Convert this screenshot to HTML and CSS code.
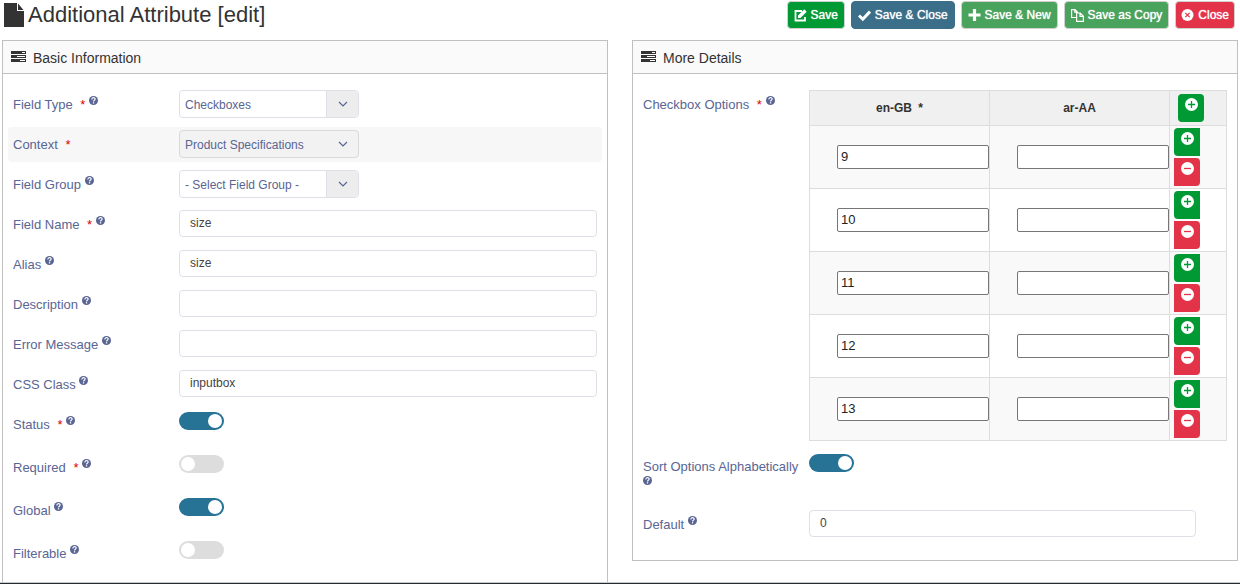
FILE: index.html
```html
<!DOCTYPE html>
<html lang="en">
<head>
<meta charset="utf-8">
<title>Additional Attribute [edit]</title>
<link rel="stylesheet" href="styles.css">
</head>
<body>
<svg class="sprite" aria-hidden="true">
  <symbol id="help" viewBox="0 0 16 16"><circle cx="8" cy="8" r="8" fill="currentColor"/><path d="M5 6c0-4 6-4 6-.6C11 7.600 8 7.500 8 9.800" fill="none" stroke="#fff" stroke-width="2"/><path d="M6.900 11h2.300v2.300H6.900z" fill="#fff"/></symbol>
  <symbol id="tasks" viewBox="0 0 15 11"><path d="M0 0h15v3H0zM0 4h15v3H0zM0 8h15v3H0z" fill="currentColor"/><path d="M11 1h3v1h-3zM6 5h8v1H6zM9 9h5v1H9z" fill="#fff"/></symbol>
  <symbol id="plus" viewBox="0 0 13 13"><circle cx="6.500" cy="6.500" r="6.500" fill="#fff"/><path d="M6.500 3v7M3 6.500h7" stroke="#093" stroke-width="1.300"/></symbol>
  <symbol id="minus" viewBox="0 0 13 13"><circle cx="6.500" cy="6.500" r="6.500" fill="#fff"/><path d="M3 6.500h7" stroke="#e33349" stroke-width="1.300"/></symbol>
  <symbol id="down" viewBox="0 0 10 6"><path d="M1 1l4 4 4-4" fill="none" stroke="currentColor" stroke-width="1.200"/></symbol>
</svg>

<header class="topbar">
  <h1 class="title">
    <svg class="title-icon" viewBox="0 0 20 24"><path d="M0 0h13v8h7v16H0zM14 0.500L19.500 7H14z" fill="#333"/></svg>
    Additional Attribute [edit]
  </h1>
  <div class="toolbar">
    <button class="btn btn-save" type="button"><svg class="btn-icon" viewBox="0 0 13 13"><path d="M8 2H1.500v9.500H11V8" fill="none" stroke="#fff" stroke-width="1.800"/><path d="M4 6.500L10.300 0.300l2.400 2.400L6.400 9H4z" fill="#fff"/></svg>Save</button>
    <button class="btn btn-blue" type="button"><svg class="btn-icon" viewBox="0 0 13 13"><path d="M1 6.500l3.800 3.700L12 2.500" fill="none" stroke="#fff" stroke-width="3"/></svg>Save &amp; Close</button>
    <button class="btn btn-green" type="button"><svg class="btn-icon" viewBox="0 0 13 13"><path d="M6.500 0v12M0.500 6h12" stroke="#fff" stroke-width="3.200"/></svg>Save &amp; New</button>
    <button class="btn btn-green" type="button"><svg class="btn-icon" viewBox="0 0 13 13"><path d="M5.500 8.500H.6V.6H4l2.400 2.400v1M3.800.8v2.400h2.400M5.600 4h3.600l3.200 3.200v5.200H5.600zM9 4.200v3.200h3.200" fill="none" stroke="#fff" stroke-width="1.200"/></svg>Save as Copy</button>
    <button class="btn btn-red" type="button"><svg class="btn-icon" viewBox="0 0 13 13"><circle cx="6.500" cy="6" r="6" fill="#fff"/><path d="M4.300 3.800l4.400 4.400M8.700 3.800L4.300 8.200" stroke="#e33349" stroke-width="1.200"/></svg>Close</button>
  </div>
</header>

<main class="panels">
  <section class="panel panel-tall">
    <h2 class="panel-title"><svg class="tasks"><use href="#tasks"/></svg>Basic Information</h2>
    <div class="panel-body">
      <div class="row">
        <label class="label" for="type">Field Type <span class="star">*</span> <svg class="help"><use href="#help"/></svg></label>
        <div class="select-wrap"><select class="select" id="type"><option>Checkboxes</option></select><span class="arrow"><svg class="down"><use href="#down"/></svg></span></div>
      </div>
      <div class="row row-shaded">
        <label class="label" for="context">Context <span class="star">*</span></label>
        <div class="select-wrap select-locked"><select class="select" id="context"><option>Product Specifications</option></select><span class="arrow"><svg class="down"><use href="#down"/></svg></span></div>
      </div>
      <div class="row">
        <label class="label" for="group">Field Group <svg class="help"><use href="#help"/></svg></label>
        <div class="select-wrap"><select class="select" id="group"><option>- Select Field Group -</option></select><span class="arrow"><svg class="down"><use href="#down"/></svg></span></div>
      </div>
      <div class="row">
        <label class="label" for="name">Field Name <span class="star">*</span> <svg class="help"><use href="#help"/></svg></label>
        <input class="input" id="name" type="text" value="size">
      </div>
      <div class="row">
        <label class="label" for="alias">Alias <svg class="help"><use href="#help"/></svg></label>
        <input class="input" id="alias" type="text" value="size">
      </div>
      <div class="row">
        <label class="label" for="desc">Description <svg class="help"><use href="#help"/></svg></label>
        <input class="input" id="desc" type="text">
      </div>
      <div class="row">
        <label class="label" for="error">Error Message <svg class="help"><use href="#help"/></svg></label>
        <input class="input" id="error" type="text">
      </div>
      <div class="row">
        <label class="label" for="css">CSS Class <svg class="help"><use href="#help"/></svg></label>
        <input class="input" id="css" type="text" value="inputbox">
      </div>
      <div class="row">
        <label class="label" for="status">Status <span class="star">*</span> <svg class="help"><use href="#help"/></svg></label>
        <input class="switch" id="status" type="checkbox" checked>
      </div>
      <div class="row">
        <label class="label" for="required">Required <span class="star">*</span> <svg class="help"><use href="#help"/></svg></label>
        <input class="switch" id="required" type="checkbox">
      </div>
      <div class="row">
        <label class="label" for="global">Global <svg class="help"><use href="#help"/></svg></label>
        <input class="switch" id="global" type="checkbox" checked>
      </div>
      <div class="row">
        <label class="label" for="filterable">Filterable <svg class="help"><use href="#help"/></svg></label>
        <input class="switch" id="filterable" type="checkbox">
      </div>
    </div>
  </section>

  <section class="panel">
    <h2 class="panel-title"><svg class="tasks"><use href="#tasks"/></svg>More Details</h2>
    <div class="panel-body">
      <div class="row">
        <div class="label">Checkbox Options <span class="star">*</span> <svg class="help"><use href="#help"/></svg></div>
        <table class="options">
          <colgroup><col><col><col class="col-actions"></colgroup>
          <thead>
            <tr><th>en-GB <span class="th-star">*</span></th><th>ar-AA</th><th class="actions"><button class="mini mini-head" type="button" aria-label="Add option"><svg class="mini-icon"><use href="#plus"/></svg></button></th></tr>
          </thead>
          <tbody>
            <tr><td><input class="option" type="text" value="9" aria-label="en-GB option 1"></td><td><input class="option" type="text" aria-label="ar-AA option 1"></td><td class="actions"><button class="mini mini-add" type="button" aria-label="Add"><svg class="mini-icon"><use href="#plus"/></svg></button><button class="mini mini-del" type="button" aria-label="Remove"><svg class="mini-icon"><use href="#minus"/></svg></button></td></tr>
            <tr><td><input class="option" type="text" value="10" aria-label="en-GB option 2"></td><td><input class="option" type="text" aria-label="ar-AA option 2"></td><td class="actions"><button class="mini mini-add" type="button" aria-label="Add"><svg class="mini-icon"><use href="#plus"/></svg></button><button class="mini mini-del" type="button" aria-label="Remove"><svg class="mini-icon"><use href="#minus"/></svg></button></td></tr>
            <tr><td><input class="option" type="text" value="11" aria-label="en-GB option 3"></td><td><input class="option" type="text" aria-label="ar-AA option 3"></td><td class="actions"><button class="mini mini-add" type="button" aria-label="Add"><svg class="mini-icon"><use href="#plus"/></svg></button><button class="mini mini-del" type="button" aria-label="Remove"><svg class="mini-icon"><use href="#minus"/></svg></button></td></tr>
            <tr><td><input class="option" type="text" value="12" aria-label="en-GB option 4"></td><td><input class="option" type="text" aria-label="ar-AA option 4"></td><td class="actions"><button class="mini mini-add" type="button" aria-label="Add"><svg class="mini-icon"><use href="#plus"/></svg></button><button class="mini mini-del" type="button" aria-label="Remove"><svg class="mini-icon"><use href="#minus"/></svg></button></td></tr>
            <tr><td><input class="option" type="text" value="13" aria-label="en-GB option 5"></td><td><input class="option" type="text" aria-label="ar-AA option 5"></td><td class="actions"><button class="mini mini-add" type="button" aria-label="Add"><svg class="mini-icon"><use href="#plus"/></svg></button><button class="mini mini-del" type="button" aria-label="Remove"><svg class="mini-icon"><use href="#minus"/></svg></button></td></tr>
          </tbody>
        </table>
      </div>
      <div class="row">
        <label class="label" for="sort">Sort Options Alphabetically <svg class="help"><use href="#help"/></svg></label>
        <input class="switch" id="sort" type="checkbox" checked>
      </div>
      <div class="row">
        <label class="label" for="default">Default <svg class="help"><use href="#help"/></svg></label>
        <input class="input input-short" id="default" type="text" value="0">
      </div>
    </div>
  </section>
</main>
<footer class="statusbar"></footer>
</body>
</html>
```
FILE: styles.css
```css
* { box-sizing: border-box; }

body {
  margin: 0;
  height: 100vh;
  display: flex;
  flex-direction: column;
  overflow: hidden;
  background: #fff;
  color: #333;
  font-family: "Liberation Sans", Arial, Helvetica, sans-serif;
  font-size: 13px;
}

button, input, select { font-family: inherit; margin: 0; }
.sprite { position: absolute; width: 0; height: 0; }

.topbar {
  display: flex;
  flex: none;
  justify-content: space-between;
  align-items: flex-start;
  height: 40px;
  padding: 1px 5px 0 4px;
}
.title {
  display: flex;
  align-items: center;
  gap: 4px;
  margin: 0;
  color: #333;
  font-size: 22px;
  font-weight: 400;
  line-height: 28px;
}
.title-icon { width: 20px; height: 24px; }

.toolbar { display: flex; gap: 6px; }
.btn {
  display: flex;
  align-items: center;
  gap: 4px;
  height: 28px;
  padding: 0 6px;
  border: 1px solid #d0d0d0;
  border-radius: 4px;
  color: #fff;
  font-size: 12px;
  text-shadow: 0 0 1px #fff;
}
.btn-icon { width: 13px; height: 13px; }
.btn-save { background: #093; }
.btn-green { background: #4aa35d; }
.btn-red { padding: 0 5px; background: #e33349; }
.btn-blue { background: #3b6f89; border-color: #3b6f89; }

.panels {
  display: grid;
  grid-template-columns: 1fr 1fr;
  gap: 24px;
  align-items: start;
  flex: 1;
  min-height: 0;
  padding: 0 2px;
  overflow: hidden;
}
.panel { border: 1px solid #c0c0c0; min-width: 0; }
.panel-tall { padding-bottom: 32px; }
.panel-title {
  display: flex;
  align-items: center;
  gap: 7px;
  height: 33px;
  margin: 0;
  padding: 1px 8px 0;
  border-bottom: 1px solid #c0c0c0;
  background: #fafafa;
  color: #333;
  font-size: 14px;
  font-weight: 400;
}
.tasks { width: 15px; height: 11px; margin-bottom: 3px; }
.panel-body { padding: 13px 5px; }

.row {
  display: grid;
  grid-template-columns: 166px minmax(0, 1fr);
  align-items: start;
  margin-bottom: 5px;
  padding: 3px 5px;
}
.row-shaded { border-radius: 4px; background: #f7f7f7; }
.label {
  padding: 6px 6px 5px 0;
  color: #596593;
  line-height: 18px;
}
.star { margin-left: 4px; color: #d00; }
.help { width: 9px; height: 9px; vertical-align: 4px; }

.input {
  width: 100%;
  height: 27px;
  padding: 0 10px 2px;
  border: 1px solid #dfdfe8;
  border-radius: 4px;
  background: #fff;
  color: #444;
  font-size: 12px;
}
.input-short { width: calc(100% - 31px); }

.select-wrap { position: relative; width: 180px; height: 28px; color: #596593; }
.select {
  appearance: none;
  width: 100%;
  height: 100%;
  padding: 1px 36px 0 5px;
  border: 1px solid #dfdfe8;
  border-radius: 4px;
  background: #fff;
  color: inherit;
  font-size: 12px;
}
.arrow {
  position: absolute;
  inset: 1px 1px 1px auto;
  display: grid;
  place-items: center;
  width: 32px;
  border-left: 1px solid #dfdfe8;
  border-radius: 0 3px 3px 0;
  background: #ededed;
  pointer-events: none;
}
.down { width: 10px; height: 6px; }
.select-locked .select { border-color: #dadada; background: #f2f2f2; }
.select-locked .arrow { border-color: transparent; background: none; }

.switch {
  appearance: none;
  display: flex;
  width: 45px;
  height: 18px;
  margin: 2px 0 12px;
  padding: 2px;
  border-radius: 9px;
  background: #ddd;
}
.switch::before {
  content: "";
  width: 14px;
  height: 14px;
  border-radius: 50%;
  background: #fff;
}
.switch:checked { justify-content: flex-end; background: #267396; }

.options {
  width: 100%;
  border-collapse: collapse;
  table-layout: fixed;
  border: 1px solid #ddd;
}
.col-actions { width: 57px; }
.options th, .options td { padding: 0; border: 1px solid #ddd; }
.options th { height: 35px; background: #f0f0f0; font-size: 12px; }
.options td { height: 63px; padding-left: 27px; }
.options tbody tr:nth-child(odd) { background: #f9f9f9; }
.th-star { margin-left: 3px; }
.option {
  display: block;
  width: 100%;
  height: 24px;
  padding: 0 3px 1px;
  border: 1px solid #767676;
  border-radius: 2px;
  background: #fff;
  color: #222;
  font-size: 13px;
}
.options .actions { padding: 0 0 0 4px; text-align: left; }
.mini {
  display: flex;
  justify-content: center;
  align-items: flex-start;
  width: 26px;
  height: 28px;
  padding: 4px 0 0;
  border: 0;
}
.mini-icon { width: 13px; height: 13px; }
.mini-head { margin-left: 4px; border-radius: 4px; background: #093; }
.mini-add { margin-bottom: 2px; border-radius: 4px 0 0 4px; background: #093; }
.mini-del { border-radius: 0 4px 4px 0; background: #e33349; }

.statusbar { flex: none; height: 2px; border-top: 1px solid #c8c8c8; background: #222b30; }
```
